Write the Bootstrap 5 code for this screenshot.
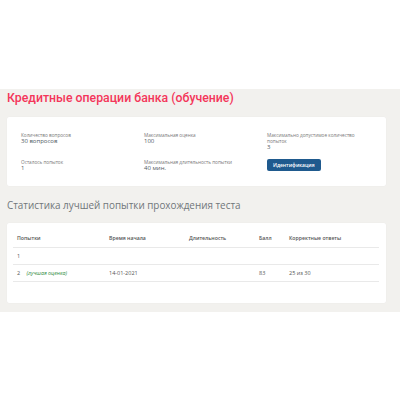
<!DOCTYPE html>
<html lang="ru"><head><meta charset="utf-8">
<link href="https://cdn.jsdelivr.net/npm/bootstrap@5.3.0/dist/css/bootstrap.min.css" rel="stylesheet">
<style>
html,body{background:#fff;font-family:"Open Sans",sans-serif;}
.pane{margin-top:89px;height:223px;background:#f2f1ee;padding:0 14px 0 7px;overflow:hidden}
.ttl{font-family:Roboto,sans-serif;font-size:12.3px;font-weight:500;color:#f4365a;line-height:18px;margin:0;padding-top:0;height:28px}
.box{background:#fff;border-radius:2px;box-shadow:0 0 1px rgba(0,0,0,.08)}
.b1{height:69px;padding:14.5px 14px 0;display:grid;grid-template-columns:123px 123px 1fr;grid-template-rows:27.5px 1fr}
.lbl{font-size:4.7px;line-height:6px;color:#777}
.val{font-size:6px;line-height:6px;color:#4f5a63;font-weight:500}
.act{display:block;width:54.5px;height:12.5px;padding:0;background:#1f5a8e;border:0;border-radius:2px;color:#fff;font-size:5px;font-weight:600;line-height:12.5px;margin:-.5px 0 0 -.5px}
.sub{font-size:9.9px;font-weight:400;color:#70767a;line-height:16px;margin:0;padding-top:11px;height:37px}
.b2{height:80px;padding:8px 7px 0 6px}
.tb{width:100%;table-layout:fixed;border-collapse:collapse;margin:0}
.tb th{font-size:5.2px;font-weight:600;color:#555;height:16.5px;padding:0 0 0 4px;border-bottom:1px solid #e9e9e9}
.tb td{font-size:5.5px;color:#555;height:17px;padding:0 0 0 4px;border-bottom:1px solid #e9e9e9}
.best{color:#2e8b3d;font-style:italic;font-size:5.3px;margin-left:5px}
</style></head><body>
<div class="pane">
<h1 class="ttl">Кредитные операции банка (обучение)</h1>
<div class="box b1">
<div><div class="lbl">Количество вопросов</div><div class="val">30 вопросов</div></div>
<div><div class="lbl">Максимальная оценка</div><div class="val">100</div></div>
<div><div class="lbl">Максимально допустимое количество попыток</div><div class="val">3</div></div>
<div><div class="lbl">Осталось попыток</div><div class="val">1</div></div>
<div><div class="lbl">Максимальная длительность попытки</div><div class="val">40 мин.</div></div>
<div><button class="btn act" type="button">Идентификация</button></div>
</div>
<h2 class="sub">Статистика лучшей попытки прохождения теста</h2>
<div class="box b2">
<table class="tb"><colgroup><col style="width:92px"><col style="width:80px"><col style="width:70px"><col style="width:30px"><col></colgroup>
<thead><tr><th>Попытки</th><th>Время начала</th><th>Длительность</th><th>Балл</th><th>Корректные ответы</th></tr></thead>
<tbody><tr><td>1</td><td></td><td></td><td></td><td></td></tr>
<tr><td>2 <span class="best">(лучшая оценка)</span></td><td>14-01-2021</td><td></td><td>83</td><td>25 из 30</td></tr></tbody></table>
</div>
</div>
<script src="https://cdn.jsdelivr.net/npm/bootstrap@5.3.0/dist/js/bootstrap.bundle.min.js"></script>
</body></html>
